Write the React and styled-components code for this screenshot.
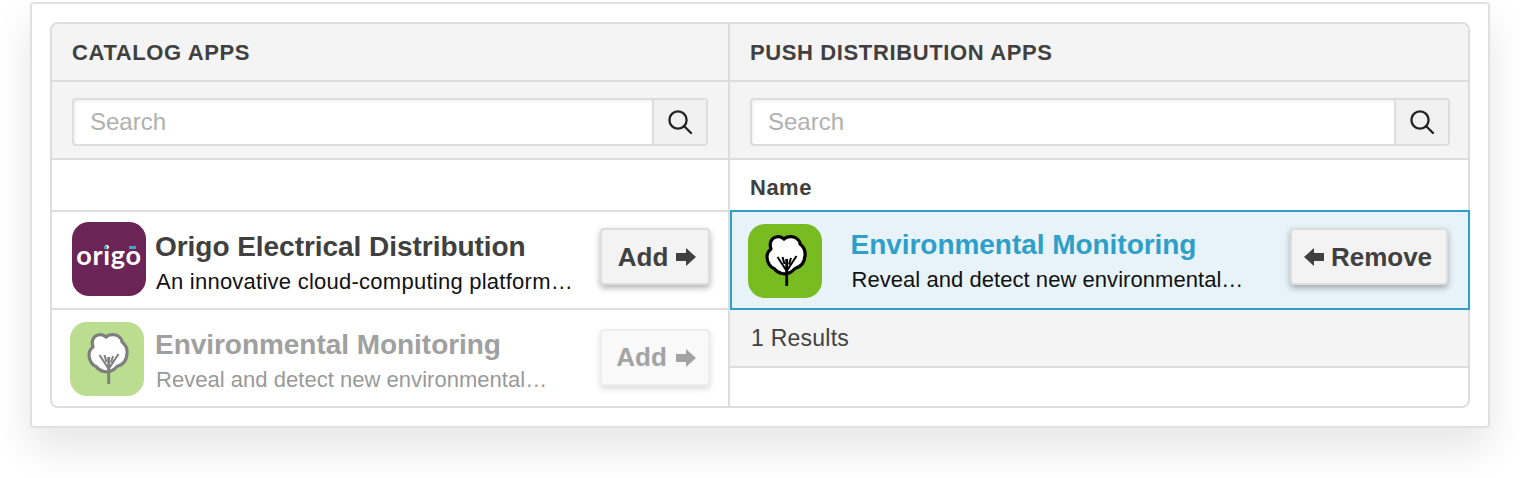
import React from "react";
import styled, { createGlobalStyle } from "styled-components";

const GlobalStyle = createGlobalStyle`
  html, body {
    margin: 0;
    padding: 0;
    background: #fff;
    font-family: "Liberation Sans", Arial, sans-serif;
  }
`;

const Page = styled.div`
  width: 1520px;
  height: 478px;
  padding: 2px 30px 0;
  box-sizing: border-box;
  overflow: hidden;
`;

const Card = styled.div`
  height: 426px;
  box-sizing: border-box;
  padding: 18px;
  background: #fff;
  border: 2px solid #e0e0e0;
  border-radius: 4px;
  box-shadow: 0 20px 40px rgba(0, 0, 0, 0.1);
`;

const Table = styled.div`
  height: 386px;
  box-sizing: border-box;
  display: grid;
  grid-template-columns: 678px 738px;
  border: 2px solid #ddd;
  border-radius: 8px;
`;

const Column = styled.div`
  display: flex;
  flex-direction: column;
  min-width: 0;
  border-right: ${(p) => (p.$divided ? "2px solid #ddd" : "none")};
`;

const Header = styled.div`
  height: 58px;
  flex: none;
  box-sizing: border-box;
  display: flex;
  align-items: center;
  padding: 1px 20px 0;
  background: #f4f4f4;
  border-bottom: 2px solid #ddd;
  color: #404040;
  font-size: 22px;
  font-weight: 700;
  letter-spacing: 0.62px;
  border-radius: ${(p) => (p.$right ? "0 6px 0 0" : "6px 0 0 0")};
`;

const SearchBar = styled.div`
  height: 78px;
  flex: none;
  box-sizing: border-box;
  padding: 16px ${(p) => (p.$right ? 18 : 20)}px 16px 20px;
  background: #f4f4f4;
  border-bottom: 2px solid #ddd;
`;

const SearchGroup = styled.div`
  height: 48px;
  box-sizing: border-box;
  display: flex;
  border: 2px solid #ddd;
  border-radius: 4px;
  background: #fff;
`;

const SearchText = styled.div`
  flex: 1;
  display: flex;
  align-items: center;
  padding-left: 16px;
  color: #b0b0b0;
  font-size: 24px;
  box-shadow: inset 2px 2px 3px rgba(0, 0, 0, 0.05);
`;

const SearchButton = styled.div`
  width: 54px;
  flex: none;
  box-sizing: border-box;
  display: flex;
  align-items: center;
  justify-content: center;
  background: #f1f1f1;
  border-left: 2px solid #ddd;
`;

const NameCell = styled.div`
  height: ${(p) => (p.$ruled ? 52 : 50)}px;
  flex: none;
  box-sizing: border-box;
  display: flex;
  align-items: center;
  padding: 6px 20px 0;
  color: #404040;
  font-size: 22px;
  font-weight: 700;
  letter-spacing: 0.5px;
  border-bottom: ${(p) => (p.$ruled ? "2px solid #ddd" : "none")};
`;

const Row = styled.div`
  height: 98px;
  flex: none;
  box-sizing: border-box;
  display: flex;
  align-items: center;
  gap: 9px;
  padding: 0 18px 2px 20px;
  border-bottom: 2px solid #ddd;
`;

const FadedRow = styled.div`
  height: 96px;
  flex: none;
  box-sizing: border-box;
  display: flex;
  align-items: center;
  gap: 11px;
  padding: 2px 18px 0;
`;

const SelectedRow = styled.div`
  height: 100px;
  flex: none;
  box-sizing: border-box;
  display: flex;
  align-items: center;
  gap: 28.5px;
  margin-right: -2px;
  padding: 2px 20px 0 16px;
  background: #e8f3f9;
  border: 2px solid #2e9fc9;
`;

const AppIcon = styled.div`
  width: 74px;
  height: 74px;
  flex: none;
  border-radius: 17px;
  overflow: hidden;
  display: flex;
  align-items: center;
  justify-content: center;
  background: ${(p) => p.$color};
  opacity: ${(p) => (p.$faded ? 0.5 : 1)};
`;

const LogoWord = styled.span`
  position: relative;
  color: #fff;
  font-family: "Lato", sans-serif;
  font-size: 27px;
  font-weight: 700;
  line-height: 1;
  letter-spacing: 0.7px;
  margin-top: -10px;
`;

const LogoMark = styled.i`
  position: absolute;
  top: 5px;
  left: ${(p) => p.$left}px;
  width: ${(p) => p.$width}px;
  height: 3px;
  background: #3fa3c9;
`;

const AppText = styled.div`
  flex: 1;
  min-width: 0;
  margin-top: ${(p) => p.$drop || 0}px;
  display: flex;
  flex-direction: column;
`;

const AppTitle = styled.div`
  color: ${(p) => p.$color || "#404040"};
  font-size: 28px;
  font-weight: 700;
  line-height: 36px;
  letter-spacing: -0.04px;
  white-space: nowrap;
`;

const AppDesc = styled.div`
  margin-top: 2px;
  margin-left: 1px;
  color: ${(p) => p.$color || "#111"};
  font-size: 22px;
  line-height: 30px;
  letter-spacing: ${(p) => p.$spacing || 0}px;
  white-space: nowrap;
`;

const ActionButton = styled.div`
  height: 57px;
  width: ${(p) => p.$width}px;
  flex: none;
  margin-bottom: ${(p) => p.$lift}px;
  box-sizing: border-box;
  display: flex;
  align-items: center;
  justify-content: center;
  gap: ${(p) => p.$gap || 7}px;
  padding: 1px ${(p) => p.$trim || 0}px 0 ${(p) => p.$inset || 0}px;
  background: ${(p) => (p.$disabled ? "#f9f9f9" : "#f3f3f3")};
  border: 2px solid ${(p) => (p.$disabled ? "#eee" : "#ddd")};
  border-radius: 4px;
  box-shadow: 0 3px 6px rgba(0, 0, 0, ${(p) => (p.$disabled ? 0.14 : 0.3)});
  color: ${(p) => (p.$disabled ? "#a3a3a3" : "#404040")};
  font-size: 26px;
  font-weight: 700;
`;

const ResultsBar = styled.div`
  height: 58px;
  flex: none;
  box-sizing: border-box;
  display: flex;
  align-items: center;
  padding: 0 21px;
  background: #f4f4f4;
  border-bottom: 2px solid #ddd;
  color: #404040;
  font-size: 23px;
  letter-spacing: 0.25px;
`;

function SearchIcon() {
  return (
    <svg width="24" height="24" viewBox="0 0 24 24" fill="none" stroke="#222" strokeWidth="2.3" strokeLinecap="round">
      <circle cx="10" cy="10" r="8.6" />
      <path d="M16 16l7 7" />
    </svg>
  );
}

function ArrowIcon({ left, color }) {
  return (
    <svg width="20" height="18" viewBox="0 0 20 18" fill={color}>
      <path d={left ? "M20 5H10V0L0 9l10 9v-5h10z" : "M0 5h10V0l10 9-10 9v-5H0z"} />
    </svg>
  );
}

function TreeIcon() {
  return (
    <svg width="74" height="74" viewBox="0 0 74 74" fill="none">
      <path
        d="M23 25C21 19 23 14.500 28 13 31 12 34 13 36 15 39 12 45 12 48 14 51 16 52 18 52 20 56 23 57.500 28 57 32 56.500 38 53 43 47 44.500 43 49 38 50.500 34 49.500 31 49 28 47 26 44.500 22 43 19 38 19 33 19 29 21 26.500 23 25Z"
        fill="#fff"
        stroke="#000"
        strokeWidth="3.200"
        strokeLinejoin="round"
      />
      <path d="M38.700 62V35" stroke="#000" strokeWidth="2.800" />
      <path d="M38.700 47L29.500 33M36.500 40L34.500 33M38.700 47L48.500 32M41 40.500L43 34" stroke="#000" strokeWidth="2" />
    </svg>
  );
}

function OrigoLogo() {
  return (
    <LogoWord>
      origo
      <LogoMark $left={28} $width={3} />
      <LogoMark $left={53} $width={7} />
    </LogoWord>
  );
}

export default function App() {
  return (
    <>
      <GlobalStyle />
      <Page>
        <Card>
          <Table>
            <Column $divided>
              <Header>CATALOG APPS</Header>
              <SearchBar>
                <SearchGroup>
                  <SearchText>Search</SearchText>
                  <SearchButton>
                    <SearchIcon />
                  </SearchButton>
                </SearchGroup>
              </SearchBar>
              <NameCell $ruled />
              <Row>
                <AppIcon $color="#6a2456">
                  <OrigoLogo />
                </AppIcon>
                <AppText $drop={8}>
                  <AppTitle>Origo Electrical Distribution</AppTitle>
                  <AppDesc $spacing={0.25}>An innovative cloud-computing platform…</AppDesc>
                </AppText>
                <ActionButton $width={110} $lift={5} $gap={8} $inset={4}>
                  Add <ArrowIcon color="#404040" />
                </ActionButton>
              </Row>
              <FadedRow>
                <AppIcon $color="#78bc22" $faded>
                  <TreeIcon />
                </AppIcon>
                <AppText $drop={4}>
                  <AppTitle $color="#a0a0a0">Environmental Monitoring</AppTitle>
                  <AppDesc $color="#999" $spacing={0.03}>Reveal and detect new environmental…</AppDesc>
                </AppText>
                <ActionButton $width={110} $lift={4} $gap={9} $inset={2} $disabled>
                  Add <ArrowIcon color="#a3a3a3" />
                </ActionButton>
              </FadedRow>
            </Column>
            <Column>
              <Header $right>PUSH DISTRIBUTION APPS</Header>
              <SearchBar $right>
                <SearchGroup>
                  <SearchText>Search</SearchText>
                  <SearchButton>
                    <SearchIcon />
                  </SearchButton>
                </SearchGroup>
              </SearchBar>
              <NameCell>Name</NameCell>
              <SelectedRow>
                <AppIcon $color="#78bc22">
                  <TreeIcon />
                </AppIcon>
                <AppText>
                  <AppTitle $color="#2e9fc9">Environmental Monitoring</AppTitle>
                  <AppDesc $spacing={0.05}>Reveal and detect new environmental…</AppDesc>
                </AppText>
                <ActionButton $width={158} $lift={9} $trim={2}>
                  <ArrowIcon left color="#404040" /> Remove
                </ActionButton>
              </SelectedRow>
              <ResultsBar>1 Results</ResultsBar>
            </Column>
          </Table>
        </Card>
      </Page>
    </>
  );
}
